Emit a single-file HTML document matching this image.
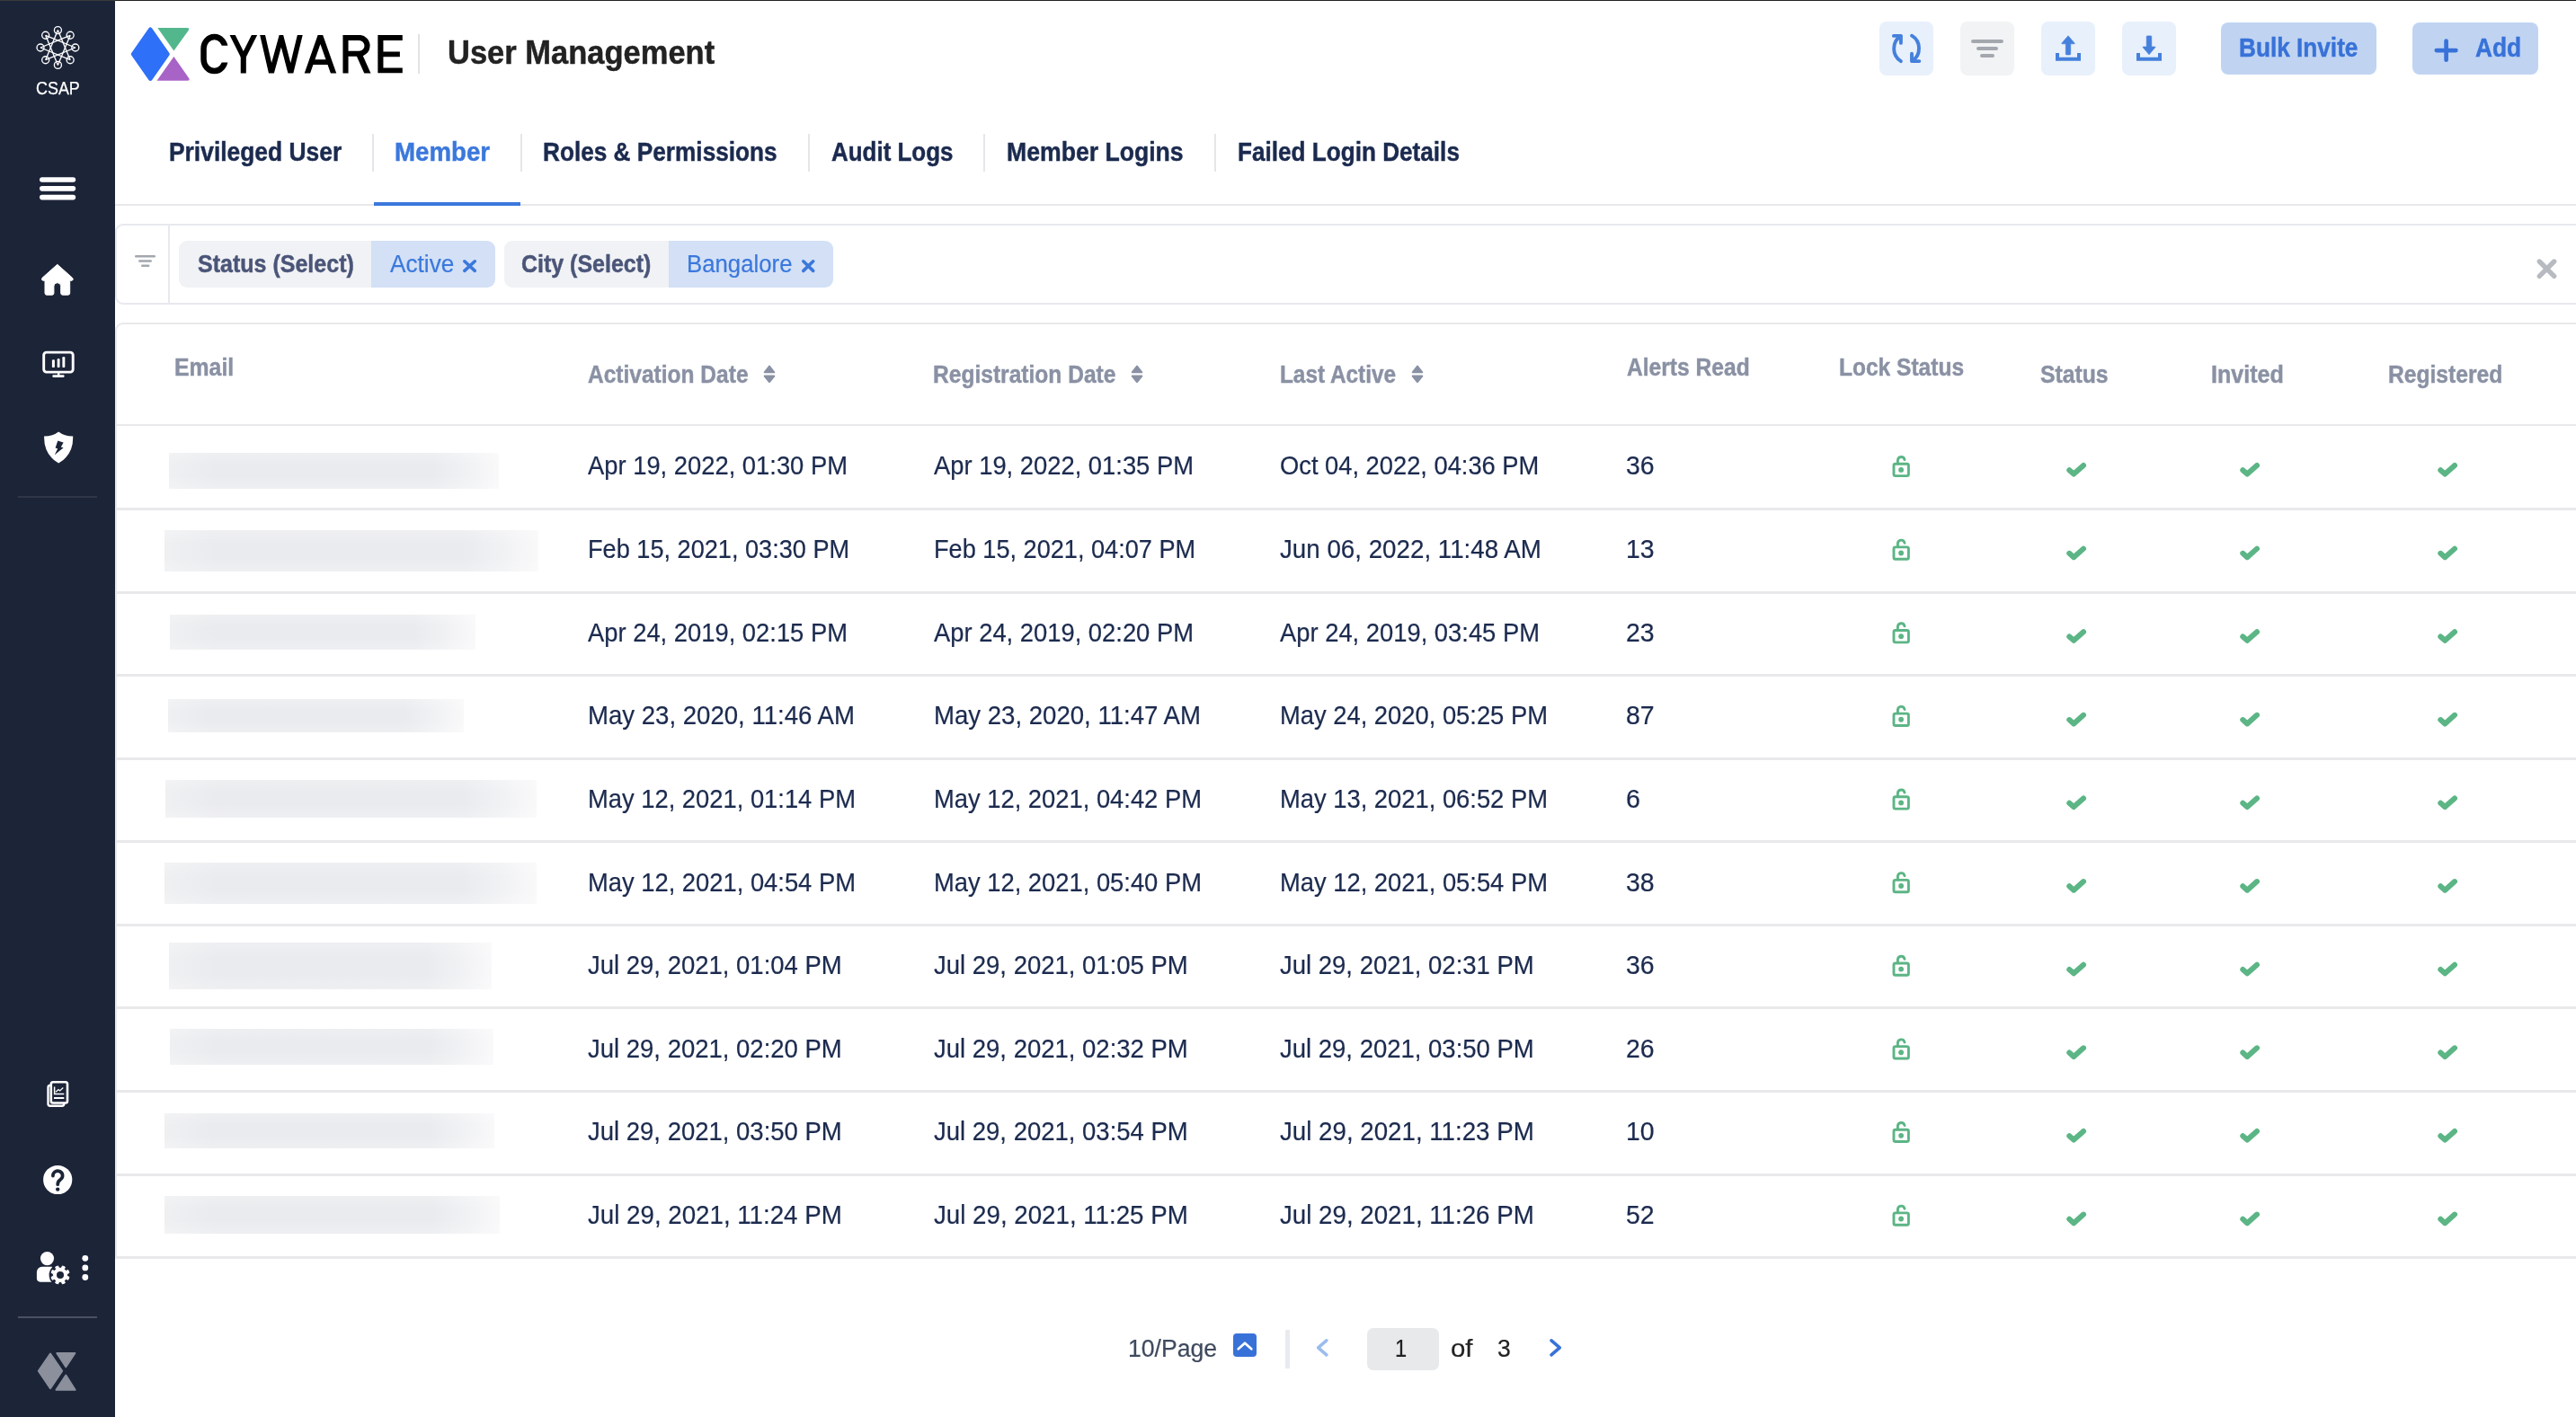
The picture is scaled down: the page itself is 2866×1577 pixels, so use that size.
<!DOCTYPE html>
<html lang="en"><head><meta charset="utf-8"><title>User Management</title>
<style>
*{box-sizing:border-box}
html,body{margin:0;padding:0}
body{width:2866px;height:1577px;overflow:hidden;background:#fff;position:relative;font-family:"Liberation Sans",sans-serif}
.a{position:absolute}
.t{position:absolute;white-space:nowrap;line-height:1;transform-origin:0 0;display:block}
svg.ov{position:absolute;left:0;top:0;overflow:visible}
.txt{position:absolute;left:0;top:0;width:2866px;height:1577px;will-change:transform}
</style></head>
<body>
<div class="a" style="left:0px;top:0px;width:128px;height:1577px;background:#1c2438;"></div>
<div class="a" style="left:128px;top:0px;width:2738px;height:1px;background:#222;"></div>
<div class="a" style="left:0px;top:0px;width:128px;height:1px;background:#3b3b39;"></div>
<div class="a" style="left:20px;top:552px;width:88px;height:2px;background:#2e3648;"></div>
<div class="a" style="left:20px;top:1465px;width:88px;height:2px;background:#4a5060;"></div>
<div class="a" style="left:465px;top:38px;width:2px;height:44px;background:#e3e3e3;"></div>
<div class="a" style="left:2091px;top:24px;width:60px;height:60px;background:#e8f0fb;border-radius:8px;"></div>
<div class="a" style="left:2181px;top:24px;width:60px;height:60px;background:#f2f3f5;border-radius:8px;"></div>
<div class="a" style="left:2271px;top:24px;width:60px;height:60px;background:#e8f0fb;border-radius:8px;"></div>
<div class="a" style="left:2361px;top:24px;width:60px;height:60px;background:#e8f0fb;border-radius:8px;"></div>
<div class="a" style="left:2471px;top:25px;width:173px;height:58px;background:#c0d4f2;border-radius:8px;"></div>
<div class="a" style="left:2684px;top:25px;width:140px;height:58px;background:#c0d4f2;border-radius:8px;"></div>
<div class="a" style="left:128px;top:227px;width:2738px;height:2px;background:#e8e9ec;"></div>
<div class="a" style="left:416px;top:225px;width:163px;height:4px;background:#3b78dc;"></div>
<div class="a" style="left:414px;top:149px;width:2px;height:42px;background:#e5e6e9;"></div>
<div class="a" style="left:579px;top:149px;width:2px;height:42px;background:#e5e6e9;"></div>
<div class="a" style="left:899px;top:149px;width:2px;height:42px;background:#e5e6e9;"></div>
<div class="a" style="left:1094px;top:149px;width:2px;height:42px;background:#e5e6e9;"></div>
<div class="a" style="left:1351px;top:149px;width:2px;height:42px;background:#e5e6e9;"></div>
<div class="a" style="left:128px;top:249px;width:2800px;height:90px;border:2px solid #e7e9ee;border-radius:9px 0 0 9px;background:#fff"></div>
<div class="a" style="left:187px;top:251px;width:2px;height:86px;background:#e7e9ee;"></div>
<div class="a" style="left:199px;top:268px;width:215px;height:52px;background:#f1f2f5;border-radius:9px 0 0 9px;"></div>
<div class="a" style="left:413px;top:268px;width:138px;height:52px;background:#d3e0f6;border-radius:0 9px 9px 0;"></div>
<div class="a" style="left:561px;top:268px;width:184px;height:52px;background:#f1f2f5;border-radius:9px 0 0 9px;"></div>
<div class="a" style="left:744px;top:268px;width:183px;height:52px;background:#d3e0f6;border-radius:0 9px 9px 0;"></div>
<div class="a" style="left:128px;top:359px;width:2800px;height:1042px;border:2px solid #e9e9eb;border-bottom:none;border-radius:9px 0 0 0;background:#fff"></div>
<div class="a" style="left:130px;top:472px;width:2736px;height:2px;background:#e9e9eb;"></div>
<div class="a" style="left:130px;top:565px;width:2738px;height:3px;background:#e9e9eb;"></div>
<div class="a" style="left:130px;top:658px;width:2738px;height:3px;background:#e9e9eb;"></div>
<div class="a" style="left:130px;top:750px;width:2738px;height:3px;background:#e9e9eb;"></div>
<div class="a" style="left:130px;top:843px;width:2738px;height:3px;background:#e9e9eb;"></div>
<div class="a" style="left:130px;top:935px;width:2738px;height:3px;background:#e9e9eb;"></div>
<div class="a" style="left:130px;top:1028px;width:2738px;height:3px;background:#e9e9eb;"></div>
<div class="a" style="left:130px;top:1120px;width:2738px;height:3px;background:#e9e9eb;"></div>
<div class="a" style="left:130px;top:1213px;width:2738px;height:3px;background:#e9e9eb;"></div>
<div class="a" style="left:130px;top:1306px;width:2738px;height:3px;background:#e9e9eb;"></div>
<div class="a" style="left:128px;top:1398px;width:2738px;height:3px;background:#e9e9eb;"></div>
<div class="a" style="left:188px;top:504px;width:367px;height:40px;background:linear-gradient(180deg,rgba(255,255,255,.22),rgba(255,255,255,0) 35%,rgba(255,255,255,0) 65%,rgba(255,255,255,.22)),linear-gradient(90deg,#eff0f2 0,#eaebee 14%,#eaebee 80%,#f1f2f4 91%,#f9f9fa 100%);"></div>
<div class="a" style="left:183px;top:590px;width:416px;height:46px;background:linear-gradient(180deg,rgba(255,255,255,.22),rgba(255,255,255,0) 35%,rgba(255,255,255,0) 65%,rgba(255,255,255,.22)),linear-gradient(90deg,#eff0f2 0,#eaebee 14%,#eaebee 80%,#f1f2f4 91%,#f9f9fa 100%);"></div>
<div class="a" style="left:189px;top:684px;width:340px;height:39px;background:linear-gradient(180deg,rgba(255,255,255,.22),rgba(255,255,255,0) 35%,rgba(255,255,255,0) 65%,rgba(255,255,255,.22)),linear-gradient(90deg,#eff0f2 0,#eaebee 14%,#eaebee 80%,#f1f2f4 91%,#f9f9fa 100%);"></div>
<div class="a" style="left:187px;top:778px;width:329px;height:37px;background:linear-gradient(180deg,rgba(255,255,255,.22),rgba(255,255,255,0) 35%,rgba(255,255,255,0) 65%,rgba(255,255,255,.22)),linear-gradient(90deg,#eff0f2 0,#eaebee 14%,#eaebee 80%,#f1f2f4 91%,#f9f9fa 100%);"></div>
<div class="a" style="left:184px;top:868px;width:413px;height:42px;background:linear-gradient(180deg,rgba(255,255,255,.22),rgba(255,255,255,0) 35%,rgba(255,255,255,0) 65%,rgba(255,255,255,.22)),linear-gradient(90deg,#eff0f2 0,#eaebee 14%,#eaebee 80%,#f1f2f4 91%,#f9f9fa 100%);"></div>
<div class="a" style="left:183px;top:960px;width:414px;height:46px;background:linear-gradient(180deg,rgba(255,255,255,.22),rgba(255,255,255,0) 35%,rgba(255,255,255,0) 65%,rgba(255,255,255,.22)),linear-gradient(90deg,#eff0f2 0,#eaebee 14%,#eaebee 80%,#f1f2f4 91%,#f9f9fa 100%);"></div>
<div class="a" style="left:188px;top:1049px;width:359px;height:52px;background:linear-gradient(180deg,rgba(255,255,255,.22),rgba(255,255,255,0) 35%,rgba(255,255,255,0) 65%,rgba(255,255,255,.22)),linear-gradient(90deg,#eff0f2 0,#eaebee 14%,#eaebee 80%,#f1f2f4 91%,#f9f9fa 100%);"></div>
<div class="a" style="left:189px;top:1145px;width:360px;height:40px;background:linear-gradient(180deg,rgba(255,255,255,.22),rgba(255,255,255,0) 35%,rgba(255,255,255,0) 65%,rgba(255,255,255,.22)),linear-gradient(90deg,#eff0f2 0,#eaebee 14%,#eaebee 80%,#f1f2f4 91%,#f9f9fa 100%);"></div>
<div class="a" style="left:183px;top:1239px;width:367px;height:39px;background:linear-gradient(180deg,rgba(255,255,255,.22),rgba(255,255,255,0) 35%,rgba(255,255,255,0) 65%,rgba(255,255,255,.22)),linear-gradient(90deg,#eff0f2 0,#eaebee 14%,#eaebee 80%,#f1f2f4 91%,#f9f9fa 100%);"></div>
<div class="a" style="left:183px;top:1331px;width:373px;height:42px;background:linear-gradient(180deg,rgba(255,255,255,.22),rgba(255,255,255,0) 35%,rgba(255,255,255,0) 65%,rgba(255,255,255,.22)),linear-gradient(90deg,#eff0f2 0,#eaebee 14%,#eaebee 80%,#f1f2f4 91%,#f9f9fa 100%);"></div>
<div class="a" style="left:1372px;top:1484px;width:26px;height:26px;background:#3872d8;border-radius:4px;"></div>
<div class="a" style="left:1430px;top:1480px;width:5px;height:43px;background:#e9eaf0;"></div>
<div class="a" style="left:1521px;top:1478px;width:80px;height:47px;background:#e8e9eb;border-radius:7px;"></div>
<svg class="ov" width="2866" height="1577" viewBox="0 0 2866 1577">
<path d="M167.3 32.800000000000004 L186.5 60.2 L167.3 87.6 L148.10000000000002 60.2 Z" fill="#2e70f7" stroke="#2e70f7" stroke-width="4.6" stroke-linejoin="round"/>
<path d="M175.3 30.9 L208 30.9 Q211.6 30.9 209.6 33.9 L193.4 56.5 Z" fill="#53b78d"/>
<path d="M193.4 62.9 L210 86.8 Q212 89.8 208.4 89.8 L174.6 89.8 Z" fill="#a863c6"/>
<defs><clipPath id="capclip"><rect x="215" y="38.9" width="240" height="42.7"/></clipPath></defs>
<defs><clipPath id="cclip"><path d="M215 30 H260 V50.7 H238 V69.6 H260 V90 H215 Z"/></clipPath></defs><path clip-path="url(#cclip)" d="M238.5 41.05 A11.95 13 0 0 1 250.45 54.05 L250.45 66.05 A11.95 13 0 0 1 238.5 79.05 A11.95 13 0 0 1 226.55 66.05 L226.55 54.05 A11.95 13 0 0 1 238.5 41.05 Z" fill="none" stroke="#000" stroke-width="6.5"/>
<g clip-path="url(#capclip)"><path d="M255.91 33.54 L270.8 63.2 L285.81 33.55" fill="none" stroke="#000" stroke-width="5.6" stroke-linejoin="miter"/><path d="M270.8 61 L270.8 86" stroke="#000" stroke-width="6.05"/><path d="M290.76 33.05 L301.9 81.6 L312.9 41.6 L323.4 81.6 L335.22 33.07" fill="none" stroke="#000" stroke-width="5.7" stroke-linejoin="miter" stroke-miterlimit="10"/><path d="M339.92 87.26 L356.4 40.1 L373.10 87.26" fill="none" stroke="#000" stroke-width="6" stroke-linejoin="miter" stroke-miterlimit="10"/><path d="M347 69.1 L366 69.1" stroke="#000" stroke-width="5.6"/><path d="M384.5 34 L384.5 86" stroke="#000" stroke-width="6.1"/><path d="M384.5 41.95 L399.6 41.95 A8.9 8.9 0 0 1 399.6 59.8 L384.5 59.8" fill="none" stroke="#000" stroke-width="6.1"/><path d="M398.4 58 L411.34 87.08" stroke="#000" stroke-width="6.6"/><path d="M447.8 41.95 L423.4 41.95 L423.4 78.55 L447.8 78.55" fill="none" stroke="#000" stroke-width="6.1" stroke-linejoin="miter"/><path d="M423.4 60.3 L444.9 60.3" stroke="#000" stroke-width="5.8"/></g>
<g fill="none" stroke="#fff" stroke-width="1.35"><line x1="64.40" y1="33.60" x2="78.12" y2="66.72"/><line x1="78.12" y1="39.28" x2="64.40" y2="72.40"/><line x1="83.80" y1="53.00" x2="50.68" y2="66.72"/><line x1="78.12" y1="66.72" x2="45.00" y2="53.00"/><line x1="64.40" y1="72.40" x2="50.68" y2="39.28"/><line x1="50.68" y1="66.72" x2="64.40" y2="33.60"/><line x1="45.00" y1="53.00" x2="78.12" y2="39.28"/><line x1="50.68" y1="39.28" x2="83.80" y2="53.00"/><circle cx="64.40" cy="33.60" r="4"/><circle cx="78.12" cy="39.28" r="4"/><circle cx="83.80" cy="53.00" r="4"/><circle cx="78.12" cy="66.72" r="4"/><circle cx="64.40" cy="72.40" r="4"/><circle cx="50.68" cy="66.72" r="4"/><circle cx="45.00" cy="53.00" r="4"/><circle cx="50.68" cy="39.28" r="4"/></g>
<rect x="44" y="197.2" width="40.2" height="5.6" rx="2.8" fill="#fff"/>
<rect x="44" y="207.04999999999998" width="40.2" height="5.6" rx="2.8" fill="#fff"/>
<rect x="44" y="216.79999999999998" width="40.2" height="5.6" rx="2.8" fill="#fff"/>
<path d="M63.8 294.3 L47 309.3 Q45.6 311.3 47.6 312.2 L50 312.2 L50 326.2 Q50 328.2 52 328.2 L58 328.2 Q59.9 328.2 59.9 326.2 L59.9 318.6 A3.9 3.9 0 0 1 67.7 318.6 L67.7 326.2 Q67.7 328.2 69.7 328.2 L75.7 328.2 Q77.7 328.2 77.7 326.2 L77.7 312.2 L80.2 312.2 Q82.2 311.3 80.6 309.3 Z" fill="#fff" stroke="#fff" stroke-width="1" stroke-linejoin="round"/>
<rect x="48.7" y="392.1" width="32.5" height="22" rx="3" fill="none" stroke="#fff" stroke-width="2.9"/>
<rect x="64.0" y="415" width="2.4" height="3.5" fill="#fff"/><rect x="58.3" y="417.3" width="13.3" height="2.6" rx="1.3" fill="#fff"/>
<rect x="57.9" y="400.3" width="3" height="8.8" rx="1.2" fill="#fff"/><rect x="63.7" y="399" width="2.8" height="10.1" rx="1.2" fill="#fff"/><rect x="69.4" y="397" width="2.9" height="12.1" rx="1.2" fill="#fff"/>
<path d="M65.2 480.4 Q59 485.3 49.1 485.6 Q48.6 506 65.2 515.6 Q81.8 506 81.2 485.6 Q71.4 485.3 65.2 480.4 Z" fill="#fff"/>
<path d="M64.3 490.6 L70.6 492.4 L67.8 497.6 L70.6 498.2 L60.8 506.3 L64.2 499.2 L61.6 498.6 Z" fill="#1c2438"/>
<rect x="53.5" y="1208" width="17.8" height="22.8" rx="2.2" fill="#1c2438" stroke="#fff" stroke-width="2.4"/>
<rect x="56.8" y="1204.3" width="18.2" height="23.2" rx="2.2" fill="#1c2438" stroke="#fff" stroke-width="2.6"/>
<path d="M60.6 1209.6 L60.6 1217.4 L71.3 1217.4" fill="none" stroke="#fff" stroke-width="1.5"/><path d="M62 1215.3 L65 1212.6 L66.6 1214 L70.3 1210.6" fill="none" stroke="#fff" stroke-width="1.3"/><path d="M60 1222 L71.3 1222" stroke="#fff" stroke-width="2"/>
<circle cx="64.2" cy="1313" r="16.1" fill="#fff"/>
<path d="M58.9 1308.6 A5.35 5.2 0 1 1 67.4 1312.6 Q64.2 1314.6 64.2 1318.2" fill="none" stroke="#1c2438" stroke-width="3.7" stroke-linecap="round"/><circle cx="64.2" cy="1323.6" r="2.2" fill="#1c2438"/>
<circle cx="52.5" cy="1400.6" r="7.55" fill="#fff"/>
<path d="M46.9 1409.7 L58 1409.7 L58 1426.7 L44.9 1426.7 Q40.9 1426.2 40.9 1422.7 L40.9 1415.7 Q41.4 1410.2 46.9 1409.7 Z" fill="#fff"/>
<circle cx="67" cy="1418.9" r="12.4" fill="#1c2438"/>
<path d="M74.60 1420.15 L77.00 1421.38 L75.82 1424.22 L73.25 1423.39 L71.49 1425.15 L72.32 1427.72 L69.48 1428.90 L68.25 1426.50 L65.75 1426.50 L64.52 1428.90 L61.68 1427.72 L62.51 1425.15 L60.75 1423.39 L58.18 1424.22 L57.00 1421.38 L59.40 1420.15 L59.40 1417.65 L57.00 1416.42 L58.18 1413.58 L60.75 1414.41 L62.51 1412.65 L61.68 1410.08 L64.52 1408.90 L65.75 1411.30 L68.25 1411.30 L69.48 1408.90 L72.32 1410.08 L71.49 1412.65 L73.25 1414.41 L75.82 1413.58 L77.00 1416.42 L74.60 1417.65 Z" fill="#fff" stroke="#fff" stroke-width="1" stroke-linejoin="round"/><circle cx="67" cy="1418.9" r="4" fill="#1c2438"/>
<circle cx="94.8" cy="1400.3" r="3.4" fill="#fff"/>
<circle cx="94.8" cy="1410.9" r="3.4" fill="#fff"/>
<circle cx="94.8" cy="1421.5" r="3.4" fill="#fff"/>
<path d="M56 1506.5 L69.2 1525.8 L56 1545.2 L42.8 1525.8 Z" fill="#8b909c" stroke="#8b909c" stroke-width="2" stroke-linejoin="round"/>
<path d="M63.3 1506 L83.4 1506 L73.3 1521.3 Z" fill="#8b909c" stroke="#8b909c" stroke-width="2" stroke-linejoin="round"/>
<path d="M73.3 1530.5 L83.6 1546.8 L62.5 1546.8 Z" fill="#8b909c" stroke="#8b909c" stroke-width="2" stroke-linejoin="round"/>
<g transform="translate(2091 24)" fill="none" stroke="#4580dc" stroke-width="3.9" stroke-linecap="round" stroke-linejoin="round"><path d="M23.9 44.1 A16.6 16.6 0 0 1 23.6 16.2"/><path d="M15.9 15.9 L23.9 15.9 L23.9 23.9"/><path d="M36 15.7 A16.5 16.5 0 0 1 36.3 43.8"/><path d="M36 35.8 L36 44.1 L44.3 44.1"/></g>
<rect x="2193" y="43.9" width="36" height="4.2" rx="2.1" fill="#a3a7ae"/><rect x="2199" y="52" width="24" height="4.1" rx="2.05" fill="#a3a7ae"/><rect x="2203" y="60" width="16" height="4.1" rx="2.05" fill="#a3a7ae"/>
<path d="M2289 59 L2289 65.8 L2313 65.8 L2313 59" fill="none" stroke="#4580dc" stroke-width="4"/>
<path d="M2301 39.8 L2308.3 48.2 Q2308.3 48.8 2307.7 48.8 L2303.7 48.8 L2303.7 60.2 Q2303.7 61 2302.9 61 L2299.1 61 Q2298.3 61 2298.3 60.2 L2298.3 48.8 L2294.3 48.8 Q2293.7 48.8 2293.7 48.2 Z" fill="#4580dc" stroke="#4580dc" stroke-width=".6" stroke-linejoin="round"/>
<path d="M2379 59 L2379 65.8 L2403 65.8 L2403 59" fill="none" stroke="#4580dc" stroke-width="4"/>
<path d="M2391 60.8 L2384 52.6 Q2384 52 2384.7 52 L2388.2 52 L2388.2 40.7 Q2388.2 39.9 2389 39.9 L2393 39.9 Q2393.8 39.9 2393.8 40.7 L2393.8 52 L2397.3 52 Q2398 52 2398 52.6 Z" fill="#4580dc" stroke="#4580dc" stroke-width=".6" stroke-linejoin="round"/>
<path d="M2710.8 56.1 L2732.4 56.1 M2721.6 45.6 L2721.6 66.7" stroke="#3872d8" stroke-width="4.7" stroke-linecap="round"/>
<rect x="150" y="284" width="23" height="2.6" rx="1.3" fill="#a3a7ae"/><rect x="154" y="289.2" width="15" height="2.6" rx="1.3" fill="#a3a7ae"/><rect x="157" y="294.4" width="9.5" height="2.6" rx="1.3" fill="#a3a7ae"/>
<path d="M2825.3 291 L2841.7 307.3 M2841.7 291 L2825.3 307.3" stroke="#b8bac1" stroke-width="5.4" stroke-linecap="round"/>
<path d="M516.8 290.8 L528.3 301.4 M528.3 290.8 L516.8 301.4" stroke="#3b78dc" stroke-width="3.6" stroke-linecap="round"/>
<path d="M893.8 290.8 L904.7 301.4 M904.7 290.8 L893.8 301.4" stroke="#3b78dc" stroke-width="3.6" stroke-linecap="round"/>
<path d="M856 407.6 L861.3 414.3 L850.7 414.3 Z" fill="#8a91a4" stroke="#8a91a4" stroke-width="2" stroke-linejoin="round"/><path d="M856 425 L861.3 418.5 L850.7 418.5 Z" fill="#8a91a4" stroke="#8a91a4" stroke-width="2" stroke-linejoin="round"/>
<path d="M1265 407.6 L1270.3 414.3 L1259.7 414.3 Z" fill="#8a91a4" stroke="#8a91a4" stroke-width="2" stroke-linejoin="round"/><path d="M1265 425 L1270.3 418.5 L1259.7 418.5 Z" fill="#8a91a4" stroke="#8a91a4" stroke-width="2" stroke-linejoin="round"/>
<path d="M1577 407.6 L1582.3 414.3 L1571.7 414.3 Z" fill="#8a91a4" stroke="#8a91a4" stroke-width="2" stroke-linejoin="round"/><path d="M1577 425 L1582.3 418.5 L1571.7 418.5 Z" fill="#8a91a4" stroke="#8a91a4" stroke-width="2" stroke-linejoin="round"/>
<g transform="translate(0 0.0)"><rect x="2107" y="516.3" width="16.4" height="13.3" rx="1.8" fill="none" stroke="#5cb585" stroke-width="2.9"/><circle cx="2115.1" cy="522.9" r="2.9" fill="#5cb585"/><path d="M2111.4 516 L2111.4 512.2 A3.85 3.95 0 0 1 2119 511.6" fill="none" stroke="#5cb585" stroke-width="2.9" stroke-linecap="round"/><path d="M2302.3 523.2 L2307.2 527.6 L2318 518" fill="none" stroke="#5cb585" stroke-width="6" stroke-linecap="round" stroke-linejoin="round"/><path d="M2495.3 523.2 L2500.2 527.6 L2511 518" fill="none" stroke="#5cb585" stroke-width="6" stroke-linecap="round" stroke-linejoin="round"/><path d="M2715.3 523.2 L2720.2 527.6 L2731 518" fill="none" stroke="#5cb585" stroke-width="6" stroke-linecap="round" stroke-linejoin="round"/></g>
<g transform="translate(0 92.62)"><rect x="2107" y="516.3" width="16.4" height="13.3" rx="1.8" fill="none" stroke="#5cb585" stroke-width="2.9"/><circle cx="2115.1" cy="522.9" r="2.9" fill="#5cb585"/><path d="M2111.4 516 L2111.4 512.2 A3.85 3.95 0 0 1 2119 511.6" fill="none" stroke="#5cb585" stroke-width="2.9" stroke-linecap="round"/><path d="M2302.3 523.2 L2307.2 527.6 L2318 518" fill="none" stroke="#5cb585" stroke-width="6" stroke-linecap="round" stroke-linejoin="round"/><path d="M2495.3 523.2 L2500.2 527.6 L2511 518" fill="none" stroke="#5cb585" stroke-width="6" stroke-linecap="round" stroke-linejoin="round"/><path d="M2715.3 523.2 L2720.2 527.6 L2731 518" fill="none" stroke="#5cb585" stroke-width="6" stroke-linecap="round" stroke-linejoin="round"/></g>
<g transform="translate(0 185.24)"><rect x="2107" y="516.3" width="16.4" height="13.3" rx="1.8" fill="none" stroke="#5cb585" stroke-width="2.9"/><circle cx="2115.1" cy="522.9" r="2.9" fill="#5cb585"/><path d="M2111.4 516 L2111.4 512.2 A3.85 3.95 0 0 1 2119 511.6" fill="none" stroke="#5cb585" stroke-width="2.9" stroke-linecap="round"/><path d="M2302.3 523.2 L2307.2 527.6 L2318 518" fill="none" stroke="#5cb585" stroke-width="6" stroke-linecap="round" stroke-linejoin="round"/><path d="M2495.3 523.2 L2500.2 527.6 L2511 518" fill="none" stroke="#5cb585" stroke-width="6" stroke-linecap="round" stroke-linejoin="round"/><path d="M2715.3 523.2 L2720.2 527.6 L2731 518" fill="none" stroke="#5cb585" stroke-width="6" stroke-linecap="round" stroke-linejoin="round"/></g>
<g transform="translate(0 277.86)"><rect x="2107" y="516.3" width="16.4" height="13.3" rx="1.8" fill="none" stroke="#5cb585" stroke-width="2.9"/><circle cx="2115.1" cy="522.9" r="2.9" fill="#5cb585"/><path d="M2111.4 516 L2111.4 512.2 A3.85 3.95 0 0 1 2119 511.6" fill="none" stroke="#5cb585" stroke-width="2.9" stroke-linecap="round"/><path d="M2302.3 523.2 L2307.2 527.6 L2318 518" fill="none" stroke="#5cb585" stroke-width="6" stroke-linecap="round" stroke-linejoin="round"/><path d="M2495.3 523.2 L2500.2 527.6 L2511 518" fill="none" stroke="#5cb585" stroke-width="6" stroke-linecap="round" stroke-linejoin="round"/><path d="M2715.3 523.2 L2720.2 527.6 L2731 518" fill="none" stroke="#5cb585" stroke-width="6" stroke-linecap="round" stroke-linejoin="round"/></g>
<g transform="translate(0 370.48)"><rect x="2107" y="516.3" width="16.4" height="13.3" rx="1.8" fill="none" stroke="#5cb585" stroke-width="2.9"/><circle cx="2115.1" cy="522.9" r="2.9" fill="#5cb585"/><path d="M2111.4 516 L2111.4 512.2 A3.85 3.95 0 0 1 2119 511.6" fill="none" stroke="#5cb585" stroke-width="2.9" stroke-linecap="round"/><path d="M2302.3 523.2 L2307.2 527.6 L2318 518" fill="none" stroke="#5cb585" stroke-width="6" stroke-linecap="round" stroke-linejoin="round"/><path d="M2495.3 523.2 L2500.2 527.6 L2511 518" fill="none" stroke="#5cb585" stroke-width="6" stroke-linecap="round" stroke-linejoin="round"/><path d="M2715.3 523.2 L2720.2 527.6 L2731 518" fill="none" stroke="#5cb585" stroke-width="6" stroke-linecap="round" stroke-linejoin="round"/></g>
<g transform="translate(0 463.1)"><rect x="2107" y="516.3" width="16.4" height="13.3" rx="1.8" fill="none" stroke="#5cb585" stroke-width="2.9"/><circle cx="2115.1" cy="522.9" r="2.9" fill="#5cb585"/><path d="M2111.4 516 L2111.4 512.2 A3.85 3.95 0 0 1 2119 511.6" fill="none" stroke="#5cb585" stroke-width="2.9" stroke-linecap="round"/><path d="M2302.3 523.2 L2307.2 527.6 L2318 518" fill="none" stroke="#5cb585" stroke-width="6" stroke-linecap="round" stroke-linejoin="round"/><path d="M2495.3 523.2 L2500.2 527.6 L2511 518" fill="none" stroke="#5cb585" stroke-width="6" stroke-linecap="round" stroke-linejoin="round"/><path d="M2715.3 523.2 L2720.2 527.6 L2731 518" fill="none" stroke="#5cb585" stroke-width="6" stroke-linecap="round" stroke-linejoin="round"/></g>
<g transform="translate(0 555.72)"><rect x="2107" y="516.3" width="16.4" height="13.3" rx="1.8" fill="none" stroke="#5cb585" stroke-width="2.9"/><circle cx="2115.1" cy="522.9" r="2.9" fill="#5cb585"/><path d="M2111.4 516 L2111.4 512.2 A3.85 3.95 0 0 1 2119 511.6" fill="none" stroke="#5cb585" stroke-width="2.9" stroke-linecap="round"/><path d="M2302.3 523.2 L2307.2 527.6 L2318 518" fill="none" stroke="#5cb585" stroke-width="6" stroke-linecap="round" stroke-linejoin="round"/><path d="M2495.3 523.2 L2500.2 527.6 L2511 518" fill="none" stroke="#5cb585" stroke-width="6" stroke-linecap="round" stroke-linejoin="round"/><path d="M2715.3 523.2 L2720.2 527.6 L2731 518" fill="none" stroke="#5cb585" stroke-width="6" stroke-linecap="round" stroke-linejoin="round"/></g>
<g transform="translate(0 648.34)"><rect x="2107" y="516.3" width="16.4" height="13.3" rx="1.8" fill="none" stroke="#5cb585" stroke-width="2.9"/><circle cx="2115.1" cy="522.9" r="2.9" fill="#5cb585"/><path d="M2111.4 516 L2111.4 512.2 A3.85 3.95 0 0 1 2119 511.6" fill="none" stroke="#5cb585" stroke-width="2.9" stroke-linecap="round"/><path d="M2302.3 523.2 L2307.2 527.6 L2318 518" fill="none" stroke="#5cb585" stroke-width="6" stroke-linecap="round" stroke-linejoin="round"/><path d="M2495.3 523.2 L2500.2 527.6 L2511 518" fill="none" stroke="#5cb585" stroke-width="6" stroke-linecap="round" stroke-linejoin="round"/><path d="M2715.3 523.2 L2720.2 527.6 L2731 518" fill="none" stroke="#5cb585" stroke-width="6" stroke-linecap="round" stroke-linejoin="round"/></g>
<g transform="translate(0 740.96)"><rect x="2107" y="516.3" width="16.4" height="13.3" rx="1.8" fill="none" stroke="#5cb585" stroke-width="2.9"/><circle cx="2115.1" cy="522.9" r="2.9" fill="#5cb585"/><path d="M2111.4 516 L2111.4 512.2 A3.85 3.95 0 0 1 2119 511.6" fill="none" stroke="#5cb585" stroke-width="2.9" stroke-linecap="round"/><path d="M2302.3 523.2 L2307.2 527.6 L2318 518" fill="none" stroke="#5cb585" stroke-width="6" stroke-linecap="round" stroke-linejoin="round"/><path d="M2495.3 523.2 L2500.2 527.6 L2511 518" fill="none" stroke="#5cb585" stroke-width="6" stroke-linecap="round" stroke-linejoin="round"/><path d="M2715.3 523.2 L2720.2 527.6 L2731 518" fill="none" stroke="#5cb585" stroke-width="6" stroke-linecap="round" stroke-linejoin="round"/></g>
<g transform="translate(0 833.58)"><rect x="2107" y="516.3" width="16.4" height="13.3" rx="1.8" fill="none" stroke="#5cb585" stroke-width="2.9"/><circle cx="2115.1" cy="522.9" r="2.9" fill="#5cb585"/><path d="M2111.4 516 L2111.4 512.2 A3.85 3.95 0 0 1 2119 511.6" fill="none" stroke="#5cb585" stroke-width="2.9" stroke-linecap="round"/><path d="M2302.3 523.2 L2307.2 527.6 L2318 518" fill="none" stroke="#5cb585" stroke-width="6" stroke-linecap="round" stroke-linejoin="round"/><path d="M2495.3 523.2 L2500.2 527.6 L2511 518" fill="none" stroke="#5cb585" stroke-width="6" stroke-linecap="round" stroke-linejoin="round"/><path d="M2715.3 523.2 L2720.2 527.6 L2731 518" fill="none" stroke="#5cb585" stroke-width="6" stroke-linecap="round" stroke-linejoin="round"/></g>
<path d="M1377.7 1501.3 L1385 1494.7 L1392.3 1501.3" fill="none" stroke="#fff" stroke-width="2.7" stroke-linecap="round" stroke-linejoin="round"/>
<path d="M1475.8 1491.8 L1466.6 1499.8 L1475.8 1507.8" fill="none" stroke="#9bbcee" stroke-width="3.6" stroke-linecap="round" stroke-linejoin="round"/>
<path d="M1726 1491.8 L1735.3 1499.8 L1726 1507.8" fill="none" stroke="#3872d8" stroke-width="3.6" stroke-linecap="round" stroke-linejoin="round"/>
</svg>
<div class="txt">
<span class="t" style="left:40.35px;top:87.00px;font-size:21px;-webkit-text-stroke-width:0.22px;color:#fff;transform:scaleX(0.8536);-webkit-text-stroke:.25px #fff;">CSAP</span>
<span class="t" style="left:498.14px;top:40.00px;font-size:37px;font-weight:700;-webkit-text-stroke-width:0.45px;color:#222;transform:scaleX(0.9324);">User Management</span>
<span class="t" style="left:187.69px;top:155.00px;font-size:29px;font-weight:700;-webkit-text-stroke-width:0.45px;color:#1b2a4e;transform:scaleX(0.9101);">Privileged User</span>
<span class="t" style="left:439.05px;top:155.00px;font-size:29px;font-weight:700;-webkit-text-stroke-width:0.45px;color:#3b78dc;transform:scaleX(0.9535);">Member</span>
<span class="t" style="left:604.40px;top:155.00px;font-size:29px;font-weight:700;-webkit-text-stroke-width:0.45px;color:#1b2a4e;transform:scaleX(0.9034);">Roles &amp; Permissions</span>
<span class="t" style="left:925.00px;top:155.00px;font-size:29px;font-weight:700;-webkit-text-stroke-width:0.45px;color:#1b2a4e;transform:scaleX(0.8950);">Audit Logs</span>
<span class="t" style="left:1120.38px;top:155.00px;font-size:29px;font-weight:700;-webkit-text-stroke-width:0.45px;color:#1b2a4e;transform:scaleX(0.9177);">Member Logins</span>
<span class="t" style="left:1376.60px;top:155.00px;font-size:29px;font-weight:700;-webkit-text-stroke-width:0.45px;color:#1b2a4e;transform:scaleX(0.9014);">Failed Login Details</span>
<span class="t" style="left:2490.90px;top:39.00px;font-size:29px;font-weight:700;-webkit-text-stroke-width:0.45px;color:#3872d8;transform:scaleX(0.9030);">Bulk Invite</span>
<span class="t" style="left:2753.70px;top:39.00px;font-size:29px;font-weight:700;-webkit-text-stroke-width:0.45px;color:#3872d8;transform:scaleX(0.9075);">Add</span>
<span class="t" style="left:219.80px;top:281.00px;font-size:27px;font-weight:700;-webkit-text-stroke-width:0.45px;color:#4a5578;transform:scaleX(0.9268);">Status (Select)</span>
<span class="t" style="left:433.70px;top:281.00px;font-size:27px;-webkit-text-stroke-width:0.22px;color:#3b78dc;transform:scaleX(0.9695);">Active</span>
<span class="t" style="left:580.07px;top:281.00px;font-size:27px;font-weight:700;-webkit-text-stroke-width:0.45px;color:#4a5578;transform:scaleX(0.9250);">City (Select)</span>
<span class="t" style="left:764.09px;top:281.00px;font-size:27px;-webkit-text-stroke-width:0.22px;color:#3b78dc;transform:scaleX(0.9544);">Bangalore</span>
<span class="t" style="left:193.78px;top:396.00px;font-size:27px;font-weight:700;-webkit-text-stroke-width:0.45px;color:#8a91a4;transform:scaleX(0.9190);">Email</span>
<span class="t" style="left:653.90px;top:404.00px;font-size:27px;font-weight:700;-webkit-text-stroke-width:0.45px;color:#8a91a4;transform:scaleX(0.9083);">Activation Date</span>
<span class="t" style="left:1038.09px;top:404.00px;font-size:27px;font-weight:700;-webkit-text-stroke-width:0.45px;color:#8a91a4;transform:scaleX(0.9100);">Registration Date</span>
<span class="t" style="left:1424.10px;top:404.00px;font-size:27px;font-weight:700;-webkit-text-stroke-width:0.45px;color:#8a91a4;transform:scaleX(0.9018);">Last Active</span>
<span class="t" style="left:1809.50px;top:396.00px;font-size:27px;font-weight:700;-webkit-text-stroke-width:0.45px;color:#8a91a4;transform:scaleX(0.9107);">Alerts Read</span>
<span class="t" style="left:2045.59px;top:396.00px;font-size:27px;font-weight:700;-webkit-text-stroke-width:0.45px;color:#8a91a4;transform:scaleX(0.9085);">Lock Status</span>
<span class="t" style="left:2270.00px;top:404.00px;font-size:27px;font-weight:700;-webkit-text-stroke-width:0.45px;color:#8a91a4;transform:scaleX(0.9166);">Status</span>
<span class="t" style="left:2460.07px;top:404.00px;font-size:27px;font-weight:700;-webkit-text-stroke-width:0.45px;color:#8a91a4;transform:scaleX(0.9300);">Invited</span>
<span class="t" style="left:2656.59px;top:404.00px;font-size:27px;font-weight:700;-webkit-text-stroke-width:0.45px;color:#8a91a4;transform:scaleX(0.9113);">Registered</span>
<span class="t" style="left:1254.83px;top:1488.00px;font-size:27px;-webkit-text-stroke-width:0.22px;color:#3f4a5e;transform:scaleX(0.9859);">10/Page</span>
<span class="t" style="left:1552.25px;top:1488.00px;font-size:27px;-webkit-text-stroke-width:0.22px;color:#222;transform:scaleX(0.8750);">1</span>
<span class="t" style="left:1613.91px;top:1488.00px;font-size:27px;-webkit-text-stroke-width:0.22px;color:#222;transform:scaleX(1.0901);">of</span>
<span class="t" style="left:1666.02px;top:1488.00px;font-size:27px;-webkit-text-stroke-width:0.22px;color:#222;transform:scaleX(0.9846);">3</span>
<span class="t" style="left:653.90px;top:504.00px;font-size:29px;-webkit-text-stroke-width:0.22px;color:#1b2a4e;transform:scaleX(0.9433);">Apr 19, 2022, 01:30 PM</span>
<span class="t" style="left:1038.90px;top:504.00px;font-size:29px;-webkit-text-stroke-width:0.22px;color:#1b2a4e;transform:scaleX(0.9433);">Apr 19, 2022, 01:35 PM</span>
<span class="t" style="left:1423.90px;top:504.00px;font-size:29px;-webkit-text-stroke-width:0.22px;color:#1b2a4e;transform:scaleX(0.9413);">Oct 04, 2022, 04:36 PM</span>
<span class="t" style="left:1808.70px;top:504.00px;font-size:29px;-webkit-text-stroke-width:0.22px;color:#1b2a4e;transform:scaleX(0.9798);">36</span>
<span class="t" style="left:653.90px;top:597.00px;font-size:29px;-webkit-text-stroke-width:0.22px;color:#1b2a4e;transform:scaleX(0.9356);">Feb 15, 2021, 03:30 PM</span>
<span class="t" style="left:1038.90px;top:597.00px;font-size:29px;-webkit-text-stroke-width:0.22px;color:#1b2a4e;transform:scaleX(0.9356);">Feb 15, 2021, 04:07 PM</span>
<span class="t" style="left:1423.90px;top:597.00px;font-size:29px;-webkit-text-stroke-width:0.22px;color:#1b2a4e;transform:scaleX(0.9564);">Jun 06, 2022, 11:48 AM</span>
<span class="t" style="left:1808.70px;top:597.00px;font-size:29px;-webkit-text-stroke-width:0.22px;color:#1b2a4e;transform:scaleX(0.9798);">13</span>
<span class="t" style="left:653.90px;top:690.00px;font-size:29px;-webkit-text-stroke-width:0.22px;color:#1b2a4e;transform:scaleX(0.9433);">Apr 24, 2019, 02:15 PM</span>
<span class="t" style="left:1038.90px;top:690.00px;font-size:29px;-webkit-text-stroke-width:0.22px;color:#1b2a4e;transform:scaleX(0.9433);">Apr 24, 2019, 02:20 PM</span>
<span class="t" style="left:1423.90px;top:690.00px;font-size:29px;-webkit-text-stroke-width:0.22px;color:#1b2a4e;transform:scaleX(0.9433);">Apr 24, 2019, 03:45 PM</span>
<span class="t" style="left:1808.70px;top:690.00px;font-size:29px;-webkit-text-stroke-width:0.22px;color:#1b2a4e;transform:scaleX(0.9798);">23</span>
<span class="t" style="left:653.90px;top:782.00px;font-size:29px;-webkit-text-stroke-width:0.22px;color:#1b2a4e;transform:scaleX(0.9510);">May 23, 2020, 11:46 AM</span>
<span class="t" style="left:1038.90px;top:782.00px;font-size:29px;-webkit-text-stroke-width:0.22px;color:#1b2a4e;transform:scaleX(0.9510);">May 23, 2020, 11:47 AM</span>
<span class="t" style="left:1423.90px;top:782.00px;font-size:29px;-webkit-text-stroke-width:0.22px;color:#1b2a4e;transform:scaleX(0.9429);">May 24, 2020, 05:25 PM</span>
<span class="t" style="left:1808.70px;top:782.00px;font-size:29px;-webkit-text-stroke-width:0.22px;color:#1b2a4e;transform:scaleX(0.9798);">87</span>
<span class="t" style="left:653.90px;top:875.00px;font-size:29px;-webkit-text-stroke-width:0.22px;color:#1b2a4e;transform:scaleX(0.9429);">May 12, 2021, 01:14 PM</span>
<span class="t" style="left:1038.90px;top:875.00px;font-size:29px;-webkit-text-stroke-width:0.22px;color:#1b2a4e;transform:scaleX(0.9429);">May 12, 2021, 04:42 PM</span>
<span class="t" style="left:1423.90px;top:875.00px;font-size:29px;-webkit-text-stroke-width:0.22px;color:#1b2a4e;transform:scaleX(0.9429);">May 13, 2021, 06:52 PM</span>
<span class="t" style="left:1808.70px;top:875.00px;font-size:29px;-webkit-text-stroke-width:0.22px;color:#1b2a4e;transform:scaleX(0.9867);">6</span>
<span class="t" style="left:653.90px;top:968.00px;font-size:29px;-webkit-text-stroke-width:0.22px;color:#1b2a4e;transform:scaleX(0.9429);">May 12, 2021, 04:54 PM</span>
<span class="t" style="left:1038.90px;top:968.00px;font-size:29px;-webkit-text-stroke-width:0.22px;color:#1b2a4e;transform:scaleX(0.9429);">May 12, 2021, 05:40 PM</span>
<span class="t" style="left:1423.90px;top:968.00px;font-size:29px;-webkit-text-stroke-width:0.22px;color:#1b2a4e;transform:scaleX(0.9429);">May 12, 2021, 05:54 PM</span>
<span class="t" style="left:1808.70px;top:968.00px;font-size:29px;-webkit-text-stroke-width:0.22px;color:#1b2a4e;transform:scaleX(0.9798);">38</span>
<span class="t" style="left:653.90px;top:1060.00px;font-size:29px;-webkit-text-stroke-width:0.22px;color:#1b2a4e;transform:scaleX(0.9480);">Jul 29, 2021, 01:04 PM</span>
<span class="t" style="left:1038.90px;top:1060.00px;font-size:29px;-webkit-text-stroke-width:0.22px;color:#1b2a4e;transform:scaleX(0.9480);">Jul 29, 2021, 01:05 PM</span>
<span class="t" style="left:1423.90px;top:1060.00px;font-size:29px;-webkit-text-stroke-width:0.22px;color:#1b2a4e;transform:scaleX(0.9480);">Jul 29, 2021, 02:31 PM</span>
<span class="t" style="left:1808.70px;top:1060.00px;font-size:29px;-webkit-text-stroke-width:0.22px;color:#1b2a4e;transform:scaleX(0.9798);">36</span>
<span class="t" style="left:653.90px;top:1153.00px;font-size:29px;-webkit-text-stroke-width:0.22px;color:#1b2a4e;transform:scaleX(0.9480);">Jul 29, 2021, 02:20 PM</span>
<span class="t" style="left:1038.90px;top:1153.00px;font-size:29px;-webkit-text-stroke-width:0.22px;color:#1b2a4e;transform:scaleX(0.9480);">Jul 29, 2021, 02:32 PM</span>
<span class="t" style="left:1423.90px;top:1153.00px;font-size:29px;-webkit-text-stroke-width:0.22px;color:#1b2a4e;transform:scaleX(0.9480);">Jul 29, 2021, 03:50 PM</span>
<span class="t" style="left:1808.70px;top:1153.00px;font-size:29px;-webkit-text-stroke-width:0.22px;color:#1b2a4e;transform:scaleX(0.9798);">26</span>
<span class="t" style="left:653.90px;top:1245.00px;font-size:29px;-webkit-text-stroke-width:0.22px;color:#1b2a4e;transform:scaleX(0.9480);">Jul 29, 2021, 03:50 PM</span>
<span class="t" style="left:1038.90px;top:1245.00px;font-size:29px;-webkit-text-stroke-width:0.22px;color:#1b2a4e;transform:scaleX(0.9480);">Jul 29, 2021, 03:54 PM</span>
<span class="t" style="left:1423.90px;top:1245.00px;font-size:29px;-webkit-text-stroke-width:0.22px;color:#1b2a4e;transform:scaleX(0.9549);">Jul 29, 2021, 11:23 PM</span>
<span class="t" style="left:1808.70px;top:1245.00px;font-size:29px;-webkit-text-stroke-width:0.22px;color:#1b2a4e;transform:scaleX(0.9798);">10</span>
<span class="t" style="left:653.90px;top:1338.00px;font-size:29px;-webkit-text-stroke-width:0.22px;color:#1b2a4e;transform:scaleX(0.9549);">Jul 29, 2021, 11:24 PM</span>
<span class="t" style="left:1038.90px;top:1338.00px;font-size:29px;-webkit-text-stroke-width:0.22px;color:#1b2a4e;transform:scaleX(0.9549);">Jul 29, 2021, 11:25 PM</span>
<span class="t" style="left:1423.90px;top:1338.00px;font-size:29px;-webkit-text-stroke-width:0.22px;color:#1b2a4e;transform:scaleX(0.9549);">Jul 29, 2021, 11:26 PM</span>
<span class="t" style="left:1808.70px;top:1338.00px;font-size:29px;-webkit-text-stroke-width:0.22px;color:#1b2a4e;transform:scaleX(0.9798);">52</span>
</div>
</body></html>
